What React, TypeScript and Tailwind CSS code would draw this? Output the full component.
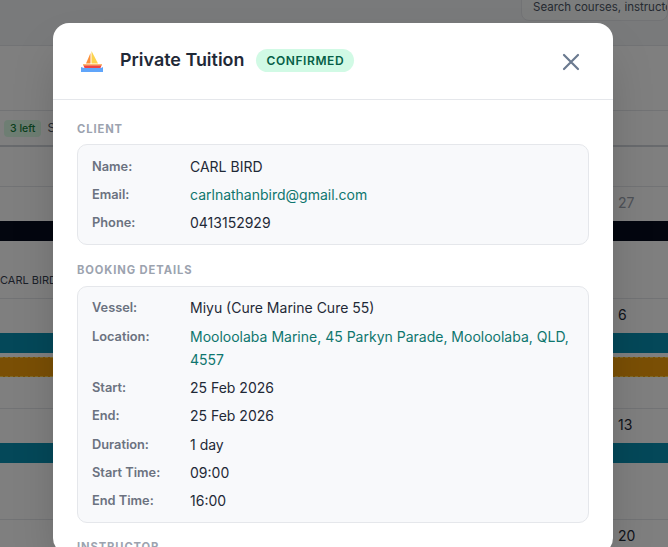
const clientRows = [
  { label: "Name:", value: "CARL BIRD" },
  { label: "Email:", value: "carlnathanbird@gmail.com", link: true },
  { label: "Phone:", value: "0413152929" },
];

const bookingRows = [
  { label: "Vessel:", value: "Miyu (Cure Marine Cure 55)" },
  { label: "Location:", value: "Mooloolaba Marine, 45 Parkyn Parade, Mooloolaba, QLD, 4557", link: true },
  { label: "Start:", value: "25 Feb 2026" },
  { label: "End:", value: "25 Feb 2026" },
  { label: "Duration:", value: "1 day" },
  { label: "Start Time:", value: "09:00" },
  { label: "End Time:", value: "16:00" },
];

function DetailBox({ rows }: { rows: { label: string; value: string; link?: boolean }[] }) {
  return (
    <div className="flex flex-col gap-[5.3px] rounded-[10px] border border-[#e5e7eb] bg-[#f8f9fb] px-[14px] py-[9.6px]">
      {rows.map((row) => (
        <div key={row.label} className="flex text-[14px] leading-[23px]">
          <span className="w-[98px] shrink-0 text-[12.8px] font-semibold text-[#6b7280]">{row.label}</span>
          <span className={row.link ? "text-[#0f766e]" : "text-[#1f2937]"}>{row.value}</span>
        </div>
      ))}
    </div>
  );
}

function BoatIcon() {
  return (
    <svg width="28" height="28" viewBox="0 0 28 28" className="mt-[2px] shrink-0">
      <path d="M13.5 6 L13.5 16.5 L9 16.5 Z" fill="#fb923c" />
      <path d="M14.5 4 L14.5 16.5 L21 16.5 Z" fill="#fcd34d" />
      <path d="M6 17 H25 L23.5 21 H7.5 Z" fill="#ef4444" />
      <rect x="6" y="17" width="19" height="1.5" fill="#fdba74" />
      <path d="M4 20 L7 21 H24 L26 20 V25 H4 Z" fill="#60a5fa" />
    </svg>
  );
}

function WeekRow({ day, muted, children }: { day: string; muted?: boolean; children?: React.ReactNode }) {
  return (
    <div className="border-b border-[#e5e7eb]">
      <div className={`h-[34px] pl-[618px] pt-[5px] text-[14px] leading-[22px] ${muted ? "text-[#9ca3af]" : "text-[#1f2937]"}`}>{day}</div>
      {children}
    </div>
  );
}

export default function App() {
  return (
    <div className="relative h-[547px] w-[668px] overflow-hidden bg-white font-['Inter',sans-serif]">
      {/* Calendar behind the dialog */}
      <div className="flex h-[46px] justify-end border-b border-[#e5e7eb] bg-[#f3f4f6]">
        <div className="-mt-[10px] ml-auto h-[31px] w-[147px] overflow-hidden whitespace-nowrap rounded-[8px] border border-[#e5e7eb] bg-[#f9fafb] pl-[11px] pt-[6px] text-[11.5px] leading-[20px] text-[#4b5563]">
          Search courses, instructors
        </div>
      </div>
      <div className="h-[65px] border-b border-[#e5e7eb]" />
      <div className="flex h-[36px] items-center gap-[6px] border-b-2 border-[#d1d5db] pl-[4px]">
        <span className="rounded-[4px] bg-[#dcfce7] px-[6px] py-[2px] text-[10.5px] font-medium leading-[13px] text-[#15803d]">3 left</span>
        <span className="text-[12px] text-[#4b5563]">Sp</span>
      </div>
      <div className="h-[40px] border-b border-[#e5e7eb]" />
      <WeekRow day="27" muted>
        <div className="h-[20px] bg-[#060d1e]" />
        <div className="mt-[29px] h-[28px] whitespace-nowrap pl-0 text-[11px] leading-[20px] text-[#374151]">CARL BIRD</div>
      </WeekRow>
      <WeekRow day="6">
        <div className="h-[20px] bg-[#0891b2]" />
        <div className="mt-[4px] h-[20px] border-y border-dashed border-[#fcd34d] bg-[#f59e0b]" />
        <div className="h-[31px]" />
      </WeekRow>
      <WeekRow day="13">
        <div className="h-[20px] bg-[#0891b2]" />
        <div className="h-[56px]" />
      </WeekRow>
      <WeekRow day="20" />

      {/* Backdrop */}
      <div className="absolute inset-0 bg-black/50" />

      {/* Dialog */}
      <div className="absolute left-[53px] top-[23px] w-[560px] rounded-[16px] bg-white shadow-2xl">
        <div className="flex h-[77px] items-center border-b border-[#e5e7eb] pb-[2px] pl-[24px] pr-[33px]">
          <BoatIcon />
          <span className="ml-[15px] text-[17.92px] font-semibold text-[#1f2937]">Private Tuition</span>
          <span className="ml-[12px] rounded-full bg-[#d1fae5] px-[10px] py-[3px] text-[12px] font-semibold leading-[17px] tracking-[0.6px] text-[#065f46]">CONFIRMED</span>
          <svg width="18" height="18" viewBox="0 0 18 18" className="ml-auto mt-[4px]" fill="none" stroke="#6b7a90" strokeWidth="2.2" strokeLinecap="round">
            <path d="M2 2 L16 16 M16 2 L2 16" />
          </svg>
        </div>
        <div className="px-[24px] pt-[22px]">
          <div className="mb-[8px] text-[11.2px] font-bold leading-[14px] tracking-[0.9px] text-[#9ca3af]">CLIENT</div>
          <DetailBox rows={clientRows} />
          <div className="mb-[9px] mt-[18px] text-[11.2px] font-bold leading-[14px] tracking-[0.9px] text-[#9ca3af]">BOOKING DETAILS</div>
          <DetailBox rows={bookingRows} />
          <div className="mt-[17px] text-[11.2px] font-bold leading-[14px] tracking-[0.9px] text-[#9ca3af]">INSTRUCTOR</div>
        </div>
      </div>
    </div>
  );
}
